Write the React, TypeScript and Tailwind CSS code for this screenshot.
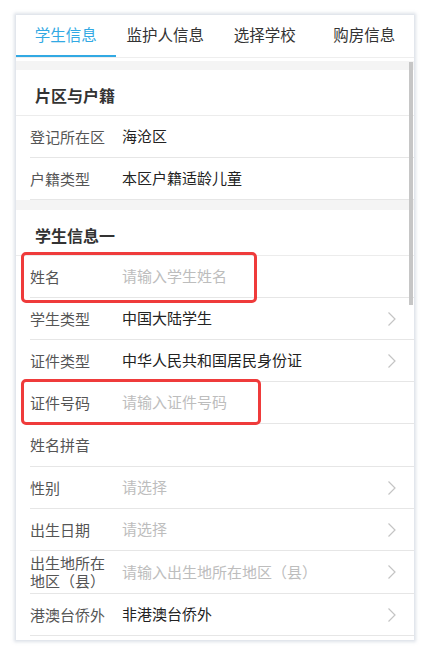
import React from "react";

type Row = {
  label: string;
  value?: string;
  placeholder?: string;
  arrow?: boolean;
  tall?: boolean;
};

const tabs = ["学生信息", "监护人信息", "选择学校", "购房信息"];

const areaRows: Row[] = [
  { label: "登记所在区", value: "海沧区" },
  { label: "户籍类型", value: "本区户籍适龄儿童" },
];

const studentRows: Row[] = [
  { label: "姓名", placeholder: "请输入学生姓名" },
  { label: "学生类型", value: "中国大陆学生", arrow: true },
  { label: "证件类型", value: "中华人民共和国居民身份证", arrow: true },
  { label: "证件号码", placeholder: "请输入证件号码" },
  { label: "姓名拼音", tall: true },
  { label: "性别", placeholder: "请选择", arrow: true },
  { label: "出生日期", placeholder: "请选择", arrow: true },
  { label: "出生地所在地区（县）", placeholder: "请输入出生地所在地区（县）", arrow: true, tall: true },
  { label: "港澳台侨外", value: "非港澳台侨外", arrow: true },
];

function Chevron() {
  return (
    <svg width="10" height="16" viewBox="0 0 10 16" className="shrink-0">
      <path d="M1.5 1.5 L8 8 L1.5 14.5" fill="none" stroke="#c4c4c4" strokeWidth="1.2" />
    </svg>
  );
}

function FormRow({ row }: { row: Row }) {
  return (
    <div className="pl-[14px]">
      <div
        className={`flex items-center border-b border-[#e6e6e6] pr-[17px] ${
          row.tall ? "h-[43px]" : "h-[42px]"
        }`}
      >
        <div className="w-[80px] shrink-0 text-[15px] leading-[18px] text-[#555]">{row.label}</div>
        <div className="ml-[12px] flex-1 text-[15px]">
          {row.value ? (
            <span className="text-[#222]">{row.value}</span>
          ) : row.placeholder ? (
            <span className="text-[#bdbdbd]">{row.placeholder}</span>
          ) : null}
        </div>
        {row.arrow && <Chevron />}
      </div>
    </div>
  );
}

function SectionTitle({ title }: { title: string }) {
  return (
    <div className="flex h-[46px] items-center border-b border-[#ececec] pl-[19px] pt-[4px] text-[16px] font-bold text-[#333]">
      {title}
    </div>
  );
}

export default function App() {
  return (
    <div
      className="min-h-[653px] bg-white pt-[15px]"
      style={{ fontFamily: '"Noto Sans CJK SC", "Noto Sans", sans-serif' }}
    >
      <div className="relative ml-[16px] h-[625px] w-[398px] overflow-hidden bg-white shadow-[0_0_3px_2px_rgba(205,212,222,0.7)]">
        <div className="flex h-[43px] border-b border-[#eeeeee]">
          {tabs.map((t, i) => (
            <div
              key={t}
              className={`flex flex-1 items-center justify-center border-b-[2px] text-[15.5px] ${
                i === 0 ? "border-[#32a9e3] text-[#32a9e3]" : "border-transparent text-[#333]"
              }`}
            >
              {t}
            </div>
          ))}
        </div>
        <div className="h-[3px] bg-white" />
        <div className="h-[9px] bg-[#f4f4f4]" />
        <SectionTitle title="片区与户籍" />
        {areaRows.map((r) => (
          <FormRow key={r.label} row={r} />
        ))}
        <div className="h-[10px] bg-[#f4f4f4]" />
        <SectionTitle title="学生信息一" />
        {studentRows.map((r) => (
          <FormRow key={r.label} row={r} />
        ))}

        {/* scrollbar thumb */}
        <div className="absolute right-[1px] top-[47px] h-[243px] w-[4px] bg-[#c6c6c6]" />

        {/* highlight boxes */}
        <div className="absolute left-[5px] top-[237px] h-[51px] w-[236px] rounded-[5px] border-[3px] border-[#ef3b3b]" />
        <div className="absolute left-[5px] top-[364px] h-[46px] w-[240px] rounded-[5px] border-[3px] border-[#ef3b3b]" />
      </div>
    </div>
  );
}
